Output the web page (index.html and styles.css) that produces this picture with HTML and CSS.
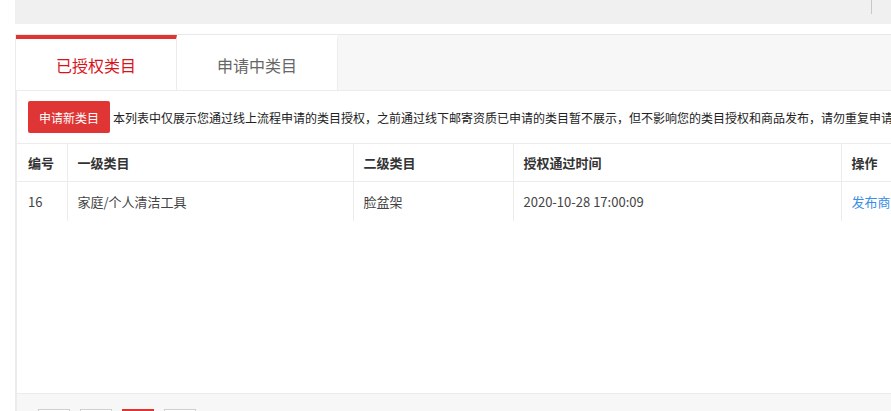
FILE: index.html
```html
<html>
<head>
  <meta charset="utf-8">
  <link rel="stylesheet" href="styles.css">
</head>
<body>
  <div id="page">
    <div id="topbar">
      <span class="divider"></span>
    </div>
    <div id="panel">
      <div id="tabs">
        <div class="tab active">已授权类目</div>
        <div class="tab">申请中类目</div>
      </div>
      <div id="tab-body">
        <div id="list">
          <div id="toolbar">
            <button id="apply-button">申请新类目</button>
            <span class="notice">本列表中仅展示您通过线上流程申请的类目授权，之前通过线下邮寄资质已申请的类目暂不展示，但不影响您的类目授权和商品发布，请勿重复申请</span>
          </div>
          <table id="category-table">
            <colgroup>
              <col style="width: 50px">
              <col style="width: 286px">
              <col style="width: 160px">
              <col style="width: 328px">
              <col style="width: 130px">
            </colgroup>
            <thead>
              <tr>
                <th>编号</th>
                <th>一级类目</th>
                <th>二级类目</th>
                <th>授权通过时间</th>
                <th>操作</th>
              </tr>
            </thead>
            <tbody>
              <tr>
                <td>16</td>
                <td>家庭/个人清洁工具</td>
                <td>脸盆架</td>
                <td>2020-10-28 17:00:09</td>
                <td><a href="#" class="link">发布商品</a></td>
              </tr>
            </tbody>
          </table>
        </div>
        <div id="footer">
          <div id="pager">
            <span class="page-btn"></span>
            <span class="page-btn"></span>
            <span class="page-btn current"></span>
            <span class="page-btn"></span>
          </div>
        </div>
      </div>
    </div>
  </div>
</body>
</html>
```

FILE: styles.css
```css
html, body {
  margin: 0;
  padding: 0;
  overflow: hidden;
  background-color: #fff;
  font-family: "Microsoft YaHei", "Noto Sans CJK SC", sans-serif;
  color: #333;
}

#page {
  padding-left: 15px;
  width: 1100px;
}

#topbar {
  height: 24px;
  background-color: #f0f0f0;
  display: flex;
  justify-content: flex-end;
  padding-right: 243px;
}

#topbar .divider {
  width: 1px;
  height: 14px;
  background-color: #c8c8c8;
}

#panel {
  margin-top: 10px;
  border-top: 1px solid #e8e8e8;
  border-left: 1px solid #ececec;
}

#tabs {
  display: flex;
  height: 55px;
  background-color: #f7f7f7;
}

.tab {
  width: 161px;
  box-sizing: border-box;
  border-top: 4px solid transparent;
  border-right: 1px solid #ececec;
  background-color: #fff;
  display: flex;
  align-items: center;
  justify-content: center;
  font-size: 16px;
  color: #666;
}

.tab.active {
  border-top-color: #e03333;
  color: #d8141b;
}

#tab-body {
  border-top: 1px solid #ececec;
  border-left: 1px solid #ececec;
}

#list {
  height: 302px;
}

#toolbar {
  display: flex;
  align-items: center;
  padding: 10px 11px;
  white-space: nowrap;
}

#apply-button {
  height: 32px;
  padding: 0 11px;
  border: none;
  border-radius: 2px;
  background-color: #e03535;
  color: #fff;
  font-family: inherit;
  font-size: 12px;
  margin-right: 3px;
}

.notice {
  font-size: 12px;
  color: #222;
}

#category-table {
  border-collapse: collapse;
  table-layout: fixed;
  width: 954px;
  font-size: 13px;
}

#category-table th,
#category-table td {
  text-align: left;
  padding: 0 10px;
  border-left: 1px solid #ececec;
  white-space: nowrap;
  overflow: hidden;
}

#category-table th:first-child,
#category-table td:first-child {
  border-left: none;
  padding-left: 11px;
}

#category-table th {
  height: 38px;
  font-weight: bold;
  color: #333;
  border-top: 1px solid #ececec;
  border-bottom: 1px solid #ececec;
}

#category-table td {
  height: 39px;
  color: #444;
}

.link {
  color: #3a8ee6;
  text-decoration: none;
}

#footer {
  border-top: 1px solid #ececec;
  background-color: #f7f7f7;
  height: 60px;
  padding: 15px 21px 0;
}

#pager {
  display: flex;
  gap: 10px;
}

.page-btn {
  width: 30px;
  height: 30px;
  border: 1px solid #cfcfcf;
  background-color: #fff;
}

.page-btn.current {
  border-color: #e03333;
  background-color: #e03333;
}
```
